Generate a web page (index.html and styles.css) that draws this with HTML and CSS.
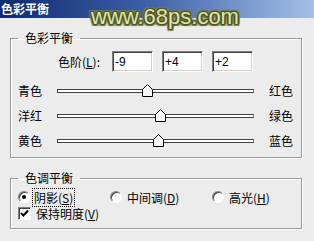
FILE: index.html
```html
<!DOCTYPE html>
<html lang="zh-CN">
<head>
    <meta charset="UTF-8">
    <title>色彩平衡</title>
    <link rel="stylesheet" href="styles.css">
</head>
<body>
    <div class="window">
        <div class="titlebar">色彩平衡</div>
        <div class="watermark">www.68ps.com</div>

        <!-- 色彩平衡 -->
        <fieldset class="group color-group">
            <legend>色彩平衡</legend>
            <div class="level-row">
                <span class="level-label">色阶(<u>L</u>):</span>
                <input class="level-input" type="text" value="-9">
                <input class="level-input" type="text" value="+4">
                <input class="level-input" type="text" value="+2">
            </div>

            <div class="slider-row">
                <span>青色</span>
                <div class="track"><span class="thumb" style="left: 84px"></span></div>
                <span>红色</span>
            </div>
            <div class="slider-row">
                <span>洋红</span>
                <div class="track"><span class="thumb" style="left: 97px"></span></div>
                <span>绿色</span>
            </div>
            <div class="slider-row">
                <span>黄色</span>
                <div class="track"><span class="thumb" style="left: 95px"></span></div>
                <span>蓝色</span>
            </div>
        </fieldset>

        <!-- 色调平衡 -->
        <fieldset class="group tone-group">
            <legend>色调平衡</legend>
            <div class="tone-row">
                <label class="option"><span class="radio checked"></span><span class="focus">阴影(<u>S</u>)</span></label>
                <label class="option"><span class="radio"></span><span>中间调(<u>D</u>)</span></label>
                <label class="option"><span class="radio"></span><span>高光(<u>H</u>)</span></label>
            </div>
            <label class="option check-row">
                <span class="checkbox">
                    <svg width="9" height="9" viewBox="0 0 9 9"><polyline points="1,4 3.5,6.5 8,1.5" fill="none" stroke="#000" stroke-width="2"/></svg>
                </span>
                <span>保持明度(<u>V</u>)</span>
            </label>
        </fieldset>
    </div>
</body>
</html>
```

FILE: styles.css
```css
body {
    margin: 0;
    padding: 0;
    background-color: #ececec;
    font-family: "Noto Sans CJK SC", "DejaVu Sans", sans-serif;
    font-size: 12px;
    color: #000;
}

.window {
    position: relative;
    width: 314px;
    height: 241px;
    overflow: hidden;
}

.titlebar {
    height: 18px;
    line-height: 17px;
    padding-left: 1px;
    font-weight: bold;
    color: #fff;
    background: linear-gradient(to right, #0f2a6e, #3a5ea6 45%, #a4c0e8);
}

/* 워터마크 */
.watermark {
    position: absolute;
    left: 91px;
    top: 4px;
    font-family: "Liberation Sans", Arial, sans-serif;
    font-size: 22px;
    line-height: 26px;
    color: #e4e2b0;
    text-shadow:
        1px 0 0 #4b5722, -1px 0 0 #4b5722, 0 1px 0 #4b5722, 0 -1px 0 #4b5722,
        1px 1px 0 #4b5722, -1px -1px 0 #4b5722, 1px -1px 0 #4b5722, -1px 1px 0 #4b5722,
        2px 0 0 #66703a, -2px 0 0 #66703a, 0 2px 0 #66703a, 0 -2px 0 #66703a,
        2px 2px 1px #7a8450, -2px 2px 1px #7a8450, 2px -2px 1px #7a8450, -2px -2px 1px #7a8450;
}

.group {
    margin: 13px 12px 0 10px;
    border: 1px solid #9a9a9a;
    box-shadow: inset 1px 1px 0 #fff, 1px 1px 0 #fff;
    min-width: 0;
}

.group legend {
    margin-left: 0;
    padding: 0 7px;
    line-height: 14px;
}

.color-group {
    padding: 6px 9px 4px 7px;
}

.level-row {
    display: flex;
    align-items: center;
    gap: 9px;
    height: 21px;
    padding-left: 40px;
}

.level-label {
    width: 45px;
}

.level-input {
    width: 41px;
    height: 21px;
    box-sizing: border-box;
    margin: 0;
    padding: 1px 2px 0;
    font-family: "Liberation Sans", Arial, sans-serif;
    font-size: 12px;
    background: #fff;
    border: 1px solid;
    border-color: #808080 #fff #fff #808080;
    box-shadow: inset 1px 1px 0 #404040, inset -1px -1px 0 #d4d0c8;
    outline: none;
}

.slider-row {
    display: grid;
    grid-template-columns: 24px 197px 24px;
    column-gap: 15px;
    align-items: center;
    height: 25px;
}

.color-group .level-row + .slider-row {
    margin-top: 6px;
}

.track {
    position: relative;
    height: 2px;
    background: #fff;
    border: 1px solid;
    border-color: #404040 #808080 #404040 #404040;
}

.thumb {
    position: absolute;
    top: -6px;
    width: 11px;
    height: 13px;
    background: url("data:image/svg+xml,%3Csvg xmlns='http://www.w3.org/2000/svg' width='11' height='13'%3E%3Cpolygon points='0.5,5.5 5.5,0.5 10.5,5.5 10.5,12.5 0.5,12.5' fill='%23fff' stroke='%23000'/%3E%3C/svg%3E") no-repeat;
}

.tone-group {
    padding: 4px 9px 7px 7px;
}

.tone-row {
    display: grid;
    grid-template-columns: 92px 102px auto;
    height: 16px;
    align-items: center;
}

.option {
    display: flex;
    align-items: center;
    height: 16px;
}

.radio {
    width: 10px;
    height: 10px;
    margin-right: 5px;
    border-radius: 50%;
    background: #fff;
    border: 1px solid;
    border-color: #808080 #fff #fff #808080;
    box-shadow: inset 1px 1px 0 #404040;
    position: relative;
}

.radio.checked::after {
    content: '';
    position: absolute;
    left: 3px;
    top: 3px;
    width: 4px;
    height: 4px;
    border-radius: 50%;
    background: #000;
}

.focus {
    outline: 1px dotted #000;
    outline-offset: 0;
    padding: 0 1px;
    margin-left: -2px;
}

.checkbox {
    width: 11px;
    height: 11px;
    margin-right: 5px;
    background: #fff;
    border: 1px solid;
    border-color: #808080 #fff #fff #808080;
    box-shadow: inset 1px 1px 0 #404040;
    display: flex;
    align-items: center;
    justify-content: center;
}

.check-row {
    height: 16px;
}
```
